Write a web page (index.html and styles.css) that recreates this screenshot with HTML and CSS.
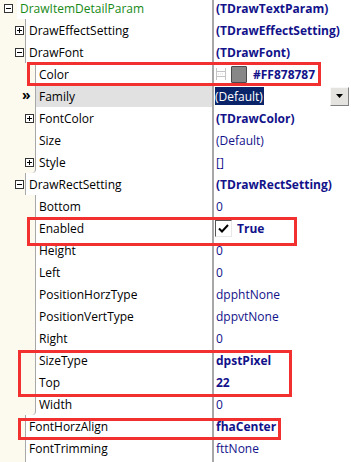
FILE: index.html
```html
<!DOCTYPE html>
<html lang="en">
<head>
  <meta charset="UTF-8">
  <title>Object Inspector</title>
  <link rel="stylesheet" href="styles.css">
</head>
<body>
  <div class="inspector">
    <div class="row">
      <div class="name"><span class="gutter lv0"><i class="box minus"></i></span><span class="label root">DrawItemDetailParam</span></div>
      <div class="value bold">(TDrawTextParam)</div>
    </div>
    <div class="row">
      <div class="name"><span class="gutter lv1"><i class="box plus"></i></span><span class="label">DrawEffectSetting</span></div>
      <div class="value bold">(TDrawEffectSetting)</div>
    </div>
    <div class="row">
      <div class="name"><span class="gutter lv1"><i class="box minus"></i></span><span class="label">DrawFont</span></div>
      <div class="value bold">(TDrawFont)</div>
    </div>
    <div class="row">
      <div class="name"><span class="gutter lv2"></span><span class="label">Color</span></div>
      <div class="value bold">
        <svg class="grid-icon" width="12" height="14" viewBox="0 0 12 14">
          <path d="M1.5 1v12M10.5 1v12M1.5 4.5h9M1.5 9.5h9" stroke="#c4c4c4" stroke-width="1" fill="none"/>
          <path d="M3 7h6" stroke="#d8d8d8" stroke-width="1" stroke-dasharray="1 1"/>
        </svg>
        <span class="swatch"></span>
        <span class="color-text">#FF878787</span>
      </div>
    </div>
    <div class="row">
      <div class="name selected"><span class="gutter lv2"><span class="arrow">&raquo;</span></span><span class="label">Family</span></div>
      <div class="value combo">
        <span class="picked">(Default)</span>
        <span class="drop"><svg width="7" height="4" viewBox="0 0 7 4"><path d="M0 0h7L3.5 4z" fill="#000"/></svg></span>
      </div>
    </div>
    <div class="row">
      <div class="name"><span class="gutter lv2"><i class="box plus"></i></span><span class="label">FontColor</span></div>
      <div class="value bold">(TDrawColor)</div>
    </div>
    <div class="row">
      <div class="name"><span class="gutter lv2"></span><span class="label">Size</span></div>
      <div class="value">(Default)</div>
    </div>
    <div class="row">
      <div class="name"><span class="gutter lv2 end"><i class="box plus"></i></span><span class="label">Style</span></div>
      <div class="value">[]</div>
    </div>
    <div class="row">
      <div class="name"><span class="gutter lv1"><i class="box minus"></i></span><span class="label">DrawRectSetting</span></div>
      <div class="value bold">(TDrawRectSetting)</div>
    </div>
    <div class="row">
      <div class="name"><span class="gutter lv2"></span><span class="label">Bottom</span></div>
      <div class="value">0</div>
    </div>
    <div class="row">
      <div class="name"><span class="gutter lv2"></span><span class="label">Enabled</span></div>
      <div class="value bold"><span class="check"><svg width="11" height="9" viewBox="0 0 11 9"><path d="M1 4.5l3 3L10 1" stroke="#000" stroke-width="2" fill="none"/></svg></span>True</div>
    </div>
    <div class="row">
      <div class="name"><span class="gutter lv2"></span><span class="label">Height</span></div>
      <div class="value">0</div>
    </div>
    <div class="row">
      <div class="name"><span class="gutter lv2"></span><span class="label">Left</span></div>
      <div class="value">0</div>
    </div>
    <div class="row">
      <div class="name"><span class="gutter lv2"></span><span class="label">PositionHorzType</span></div>
      <div class="value">dpphtNone</div>
    </div>
    <div class="row">
      <div class="name"><span class="gutter lv2"></span><span class="label">PositionVertType</span></div>
      <div class="value">dppvtNone</div>
    </div>
    <div class="row">
      <div class="name"><span class="gutter lv2"></span><span class="label">Right</span></div>
      <div class="value">0</div>
    </div>
    <div class="row">
      <div class="name"><span class="gutter lv2"></span><span class="label">SizeType</span></div>
      <div class="value bold">dpstPixel</div>
    </div>
    <div class="row">
      <div class="name"><span class="gutter lv2"></span><span class="label">Top</span></div>
      <div class="value bold">22</div>
    </div>
    <div class="row">
      <div class="name"><span class="gutter lv2 end"></span><span class="label">Width</span></div>
      <div class="value">0</div>
    </div>
    <div class="row">
      <div class="name"><span class="gutter lv1"></span><span class="label">FontHorzAlign</span></div>
      <div class="value bold">fhaCenter</div>
    </div>
    <div class="row">
      <div class="name"><span class="gutter lv1"></span><span class="label">FontTrimming</span></div>
      <div class="value">fttNone</div>
    </div>
    <div class="row">
      <div class="name"><span class="gutter lv1"></span><span class="label"></span></div>
      <div class="value"></div>
    </div>

    <div class="mark mark-color"></div>
    <div class="mark mark-enabled"></div>
    <div class="mark mark-size"></div>
    <div class="mark mark-align"></div>
  </div>
</body>
</html>
```

FILE: styles.css
```css
body {
  margin: 0;
  background: #fff;
  overflow: hidden;
  font-family: "Open Sans", "Noto Sans", sans-serif;
  font-size: 12px;
}

.inspector {
  position: relative;
  margin-top: -3px;
  width: 351px;
}

.row {
  display: flex;
  height: 22px;
}

.name {
  width: 212px;
  display: flex;
  align-items: stretch;
  color: #000;
}

.gutter {
  flex: none;
  display: flex;
  align-items: center;
  background: #fcf9ee;
}

.gutter.lv0 { width: 17px; }
.gutter.lv1 { width: 25px; border-right: 1px solid #a8a8a8; }
.gutter.lv2 { width: 35px; border-right: 1px solid #a8a8a8; }
.gutter.end { border-bottom-right-radius: 4px; }

.box {
  width: 9px;
  height: 9px;
  box-sizing: border-box;
  border: 1px solid #333;
  background: #fff;
  position: relative;
}

.box::before {
  content: "";
  position: absolute;
  left: 1px;
  top: 3px;
  width: 5px;
  height: 1px;
  background: #000;
}

.box.plus::after {
  content: "";
  position: absolute;
  left: 3px;
  top: 1px;
  width: 1px;
  height: 5px;
  background: #000;
}

.lv0 .box { margin-left: 4px; }
.lv1 .box { margin-left: 15px; }
.lv2 .box { margin-left: 25px; }

.arrow {
  margin-left: 22px;
  font-size: 14px;
  font-weight: bold;
  line-height: 1;
  margin-top: -3px;
}

.label {
  flex: 1;
  display: flex;
  align-items: center;
  padding-left: 3px;
  white-space: nowrap;
}

.label.root {
  color: #168a16;
}

.name.selected .label {
  background: #e1e1e1;
}

.value {
  flex: 1;
  display: flex;
  align-items: center;
  border-left: 2px solid #a8a8a8;
  padding-left: 2px;
  color: #12128a;
  white-space: nowrap;
}

.value.bold {
  font-weight: bold;
}

.grid-icon {
  margin-left: -1px;
}

.swatch {
  width: 16px;
  height: 17px;
  box-sizing: border-box;
  margin-left: 4px;
  background: #878787;
  border: 1px solid #4a4a4a;
  border-radius: 1px;
}

.color-text {
  margin-left: 6px;
}

.combo {
  padding-left: 1px;
  padding-right: 2px;
}

.picked {
  background: #0a246a;
  color: #fff;
  height: 18px;
  display: flex;
  align-items: center;
  padding-right: 1px;
}

.drop {
  margin-left: auto;
  width: 19px;
  height: 19px;
  box-sizing: border-box;
  display: flex;
  align-items: center;
  justify-content: center;
  background: #e4e3e0;
  border: 1px solid;
  border-color: #f8f8f8 #808080 #808080 #f8f8f8;
}

.check {
  width: 17px;
  height: 17px;
  box-sizing: border-box;
  display: flex;
  align-items: center;
  justify-content: center;
  background: #fff;
  border: 1px solid;
  border-color: #555 #e8e8e8 #e8e8e8 #555;
  margin-left: -1px;
  margin-right: 5px;
}

.mark {
  position: absolute;
  border: 3px solid #f23030;
  box-sizing: border-box;
}

.mark-color { left: 27px; top: 65px; width: 294px; height: 24px; }
.mark-enabled { left: 27px; top: 220px; width: 270px; height: 29px; }
.mark-size { left: 18px; top: 353px; width: 274px; height: 47px; }
.mark-align { left: 18px; top: 421px; width: 263px; height: 22px; }
```
